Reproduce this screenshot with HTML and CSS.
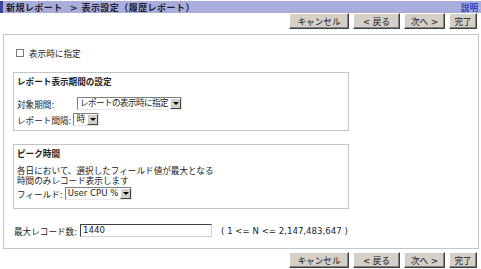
FILE: index.html
```html
<!DOCTYPE html>
<html lang="ja">
<head>
<meta charset="utf-8">
<title>新規レポート</title>
<link rel="stylesheet" href="styles.css">
</head>
<body>
<div class="header">
  <span class="title">新規レポート&nbsp; &gt; 表示設定（履歴レポート）</span>
  <span class="help">説明</span>
</div>
<div class="toolbar">
  <span class="btn w-cancel">キャンセル</span>
  <span class="btn w-back">&lt; 戻る</span>
  <span class="btn w-next">次へ &gt;</span>
  <span class="btn w-done">完了</span>
</div>
<div class="main">
  <div class="check-row">
    <span class="checkbox"></span>
    <span>表示時に指定</span>
  </div>
  <div class="box box1">
    <div class="box-title">レポート表示期間の設定</div>
    <div class="form-row first">
      <span class="label l1">対象期間:</span>
      <span class="select s1"><span class="sel-text tight">レポートの表示時に指定</span><span class="arrow"></span></span>
    </div>
    <div class="form-row second">
      <span class="label">レポート間隔:</span>
      <span class="select s2"><span class="sel-text">時</span><span class="arrow"></span></span>
    </div>
  </div>
  <div class="box box2">
    <div class="box-title">ピーク時間</div>
    <div class="desc">各日において、選択したフィールド値が最大となる<br>時間のみレコード表示します</div>
    <div class="form-row">
      <span class="label">フィールド:</span>
      <span class="select s3"><span class="sel-text">User CPU %</span><span class="arrow"></span></span>
    </div>
  </div>
  <div class="max-row">
    <span class="label">最大レコード数:</span>
    <span class="input">1440</span>
    <span class="range">( 1 &lt;= N &lt;= 2,147,483,647 )</span>
  </div>
</div>
<div class="toolbar bottom">
  <span class="btn w-cancel">キャンセル</span>
  <span class="btn w-back">&lt; 戻る</span>
  <span class="btn w-next">次へ &gt;</span>
  <span class="btn w-done">完了</span>
</div>
</body>
</html>
```
FILE: styles.css
```css
html, body {
  margin: 0;
  padding: 0;
  background: #ffffff;
}
body {
  font-family: "DejaVu Sans", "Noto Sans CJK JP", sans-serif;
  font-size: 8.6px;
  color: #222222;
  width: 481px;
  height: 269px;
  overflow: hidden;
}
.header {
  margin-top: 1px;
  height: 12px;
  background: #a9addb;
  border-left: 3px solid #3e4594;
  display: flex;
  justify-content: space-between;
  align-items: center;
  padding: 0 3px 0 3px;
}
.title {
  font-weight: bold;
  color: #1e1e2e;
  font-size: 9px;
  letter-spacing: 0.45px;
}
.help {
  color: #2a46b8;
  font-weight: bold;
  font-size: 8.6px;
}
.toolbar {
  display: flex;
  justify-content: flex-end;
  gap: 4px;
  padding-right: 4px;
}
.toolbar.bottom {
  margin-top: 3px;
}
.btn {
  height: 16px;
  box-sizing: border-box;
  background: #d4d0c8;
  border-top: 1px solid #ffffff;
  border-left: 1px solid #ffffff;
  border-right: 1px solid #404040;
  border-bottom: 1px solid #404040;
  box-shadow: inset -1px -1px 0 #808080;
  display: flex;
  align-items: center;
  justify-content: center;
  font-size: 8.6px;
  color: #111111;
}
.w-cancel { width: 60px; }
.w-back { width: 47px; }
.w-next { width: 41px; }
.w-done { width: 28px; }
.main {
  margin: 5px 2px 0 3px;
  border: 1px solid #c4c4c4;
  padding: 13px 0 11px 0;
}
.check-row {
  display: flex;
  align-items: center;
  height: 10px;
  padding-left: 12px;
  gap: 5px;
}
.checkbox {
  width: 8px;
  height: 8px;
  box-sizing: border-box;
  border: 1px solid #7a7a7a;
  background: #ffffff;
}
.box {
  margin-left: 9px;
  width: 336px;
  box-sizing: border-box;
  border: 1px solid #c4c4c4;
  padding-left: 3px;
}
.box1 {
  margin-top: 14px;
  padding-top: 4px;
  padding-bottom: 4px;
}
.box2 {
  margin-top: 13px;
  padding-top: 4px;
  padding-bottom: 8px;
}
.box-title {
  font-weight: bold;
  height: 11px;
  line-height: 11px;
}
.form-row {
  display: flex;
  align-items: center;
  height: 13px;
}
.form-row.first {
  margin-top: 9px;
}
.form-row.second {
  margin-top: 3px;
}
.label {
  margin-right: 2px;
}
.l1 {
  width: 58px;
}
.desc {
  margin-top: 6px;
  line-height: 10px;
  margin-bottom: 1px;
}
.select {
  height: 13px;
  box-sizing: border-box;
  border-top: 1px solid #808080;
  border-left: 1px solid #808080;
  border-right: 1px solid #e8e8e8;
  border-bottom: 1px solid #e8e8e8;
  background: #ffffff;
  display: flex;
  align-items: center;
  padding-left: 2px;
}
.sel-text {
  white-space: nowrap;
  line-height: 11px;
  padding-right: 2px;
}
.sel-text.tight {
  letter-spacing: -0.6px;
}
.arrow {
  width: 11px;
  height: 11px;
  box-sizing: border-box;
  background: #d4d0c8;
  border-top: 1px solid #ffffff;
  border-left: 1px solid #ffffff;
  border-right: 1px solid #404040;
  border-bottom: 1px solid #404040;
  position: relative;
  flex: none;
}
.arrow::after {
  content: "";
  position: absolute;
  left: 2px;
  top: 3px;
  border-left: 3px solid transparent;
  border-right: 3px solid transparent;
  border-top: 3px solid #000000;
}
.max-row {
  margin-top: 15px;
  display: flex;
  align-items: center;
  height: 13px;
  padding-left: 10px;
}
.input {
  width: 132px;
  height: 13px;
  box-sizing: border-box;
  border-top: 1px solid #404040;
  border-left: 1px solid #404040;
  border-right: 1px solid #d0d0d0;
  border-bottom: 1px solid #d0d0d0;
  background: #ffffff;
  padding-left: 2px;
  line-height: 11px;
  margin-left: 1px;
}
.range {
  margin-left: 9px;
}
```
